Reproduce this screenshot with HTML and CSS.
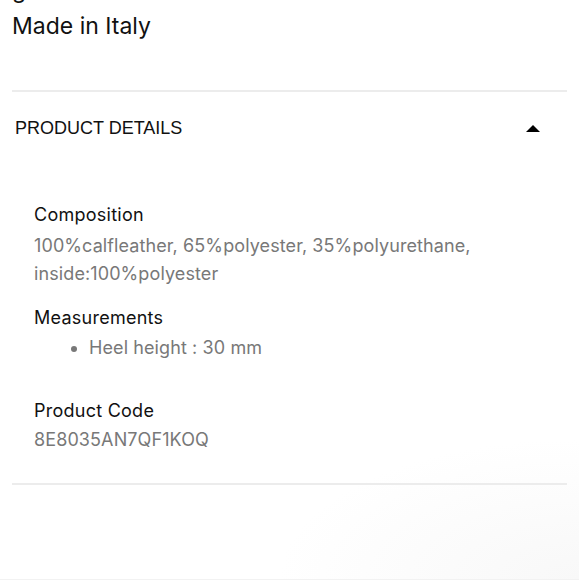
FILE: index.html
```html
<!DOCTYPE html>
<html lang="en">
<head>
<meta charset="utf-8">
<title>Product details</title>
<link rel="stylesheet" href="styles.css">
</head>
<body>
<div class="page">
  <div class="intro">
    <p class="intro-line">genuine leather</p>
    <p class="intro-line">Made in Italy</p>
  </div>

  <section class="accordion">
    <button class="acc-head" type="button">
      <span class="acc-title">PRODUCT DETAILS</span>
      <span class="acc-caret" aria-hidden="true"></span>
    </button>
    <div class="acc-body">
      <div class="detail detail-composition">
        <h3 class="detail-label">Composition</h3>
        <p class="detail-value">100%calfleather, 65%polyester, 35%polyurethane, inside:100%polyester</p>
      </div>
      <div class="detail">
        <h3 class="detail-label">Measurements</h3>
        <ul class="detail-list">
          <li>Heel height : 30 mm</li>
        </ul>
      </div>
      <div class="detail detail-code">
        <h3 class="detail-label">Product Code</h3>
        <p class="detail-value">8E8035AN7QF1KOQ</p>
      </div>
    </div>
  </section>
</div>
</body>
</html>
```

FILE: styles.css
```css
* { box-sizing: border-box; }

html, body {
  margin: 0;
  padding: 0;
  background: #ffffff;
}

body {
  font-family: Inter, "Liberation Sans", sans-serif;
  color: #111111;
  overflow: hidden;
}

.page {
  display: flow-root;
  overflow: hidden;
  width: 579px;
  height: 580px;
  padding: 0 12px;
  background: radial-gradient(ellipse 300px 140px at 100% 100%, #f8f8f8 0%, #ffffff 100%);
  border-bottom: 1px solid #f2f2f2;
}

.intro {
  margin-top: -27px;
  padding-bottom: 47px;
}

.intro-line {
  margin: 0;
  font-size: 23px;
  line-height: 34px;
  color: #111;
}

.intro-line + .intro-line {
  margin-top: 2px;
}

.accordion {
  border-top: 2px solid #ececec;
  border-bottom: 2px solid #ececec;
}

.acc-head {
  display: flex;
  width: 100%;
  align-items: center;
  justify-content: space-between;
  padding: 24px 27px 24px 3px;
  border: 0;
  background: transparent;
  font: inherit;
  color: #111;
  text-align: left;
}

.acc-title {
  font-family: "Liberation Sans", Arial, sans-serif;
  font-size: 18px;
  line-height: 24px;
}

.acc-caret {
  width: 0;
  height: 0;
  border-left: 7px solid transparent;
  border-right: 7px solid transparent;
  border-bottom: 7px solid #000;
}

.acc-body {
  padding: 39px 0 29px 22px;
}

.detail {
  margin-bottom: 18px;
}

.detail-code {
  margin-top: 37px;
  margin-bottom: 0;
}

.detail-label {
  margin: 0 0 4px;
  font-size: 18px;
  font-weight: 400;
  line-height: 24px;
  letter-spacing: 0.25px;
  color: #111;
}

.detail-composition .detail-label {
  margin-bottom: 5px;
}

.detail-code .detail-label {
  margin-bottom: 3px;
}

.detail-value {
  margin: 0;
  font-size: 18px;
  line-height: 28px;
  letter-spacing: 0.1px;
  color: #787878;
}

.detail-list {
  margin: 0;
  padding-left: 55px;
  font-size: 18px;
  line-height: 28px;
  letter-spacing: 0.1px;
  color: #787878;
}
```
